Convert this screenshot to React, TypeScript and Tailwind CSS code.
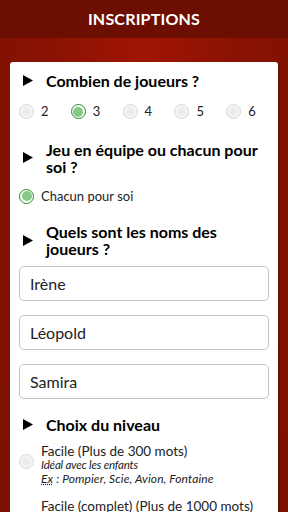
import React from 'react';

const Triangle = () => (
  <svg width="10" height="11" viewBox="0 0 10 11" className="shrink-0">
    <path d="M0 0 L10 5.5 L0 11 Z" fill="#000" />
  </svg>
);

const Radio = ({ checked = false }: { checked?: boolean }) => (
  <span
    className={`inline-flex items-center justify-center w-[15px] h-[15px] rounded-full shrink-0 ${
      checked
        ? 'border-[1.5px] border-[#1f8f1f] bg-white'
        : 'border border-[#d6d6d6] bg-[radial-gradient(circle,#e6e6e6_0%,#f6f6f6_70%)]'
    }`}
  >
    {checked && <span className="w-[10px] h-[10px] rounded-full bg-[#86c886]" />}
  </span>
);

const Heading = ({ children }: { children: React.ReactNode }) => (
  <div className="flex items-center pl-[13px] pr-2">
    <Triangle />
    <h2 className="ml-[13px] text-[16px] leading-[17px] font-bold text-black">{children}</h2>
  </div>
);

const players = ['Irène', 'Léopold', 'Samira'];

export default function App() {
  return (
    <div
      className="w-[288px] h-[512px] overflow-hidden text-[#222]"
      style={{ fontFamily: 'Lato, "Open Sans", sans-serif' }}
    >
      {/* Header */}
      <div className="h-[38px] bg-[#6d0e03] flex items-center justify-center">
        <h1 className="text-white font-bold text-[16px] tracking-[0.2px]">INSCRIPTIONS</h1>
      </div>

      {/* Body */}
      <div className="bg-[radial-gradient(ellipse_at_50%_0%,#a11503_0%,#8a1202_45%,#7a1203_100%)] h-full pt-[24px] px-[10px]">
        <div className="bg-white rounded-[3px] shadow-[1px_1px_2px_rgba(0,0,0,0.35)] pt-[10px] pb-6">
          {/* players count */}
          <Heading>Combien de joueurs ?</Heading>
          <div className="flex items-center pl-[9px] mt-[13px]">
            {['2', '3', '4', '5', '6'].map((n) => (
              <label key={n} className="flex items-center w-[53px] text-[13px] text-[#222]">
                <Radio checked={n === '3'} />
                <span className="ml-[7px]">{n}</span>
              </label>
            ))}
          </div>

          {/* team mode */}
          <div className="mt-[19px]">
            <Heading>
              Jeu en équipe ou chacun pour
              <br />
              soi ?
            </Heading>
          </div>
          <label className="flex items-center pl-[9px] mt-[12px] text-[13px] text-[#222]">
            <Radio checked />
            <span className="ml-[7px]">Chacun pour soi</span>
          </label>

          {/* names */}
          <div className="mt-[17px]">
            <Heading>
              Quels sont les noms des
              <br />
              joueurs ?
            </Heading>
          </div>
          <div className="px-[9px] mt-[9px] flex flex-col gap-[14px]">
            {players.map((p) => (
              <div
                key={p}
                className="h-[35px] border border-[#c4c4c4] rounded-[5px] flex items-center px-[10px] text-[16px] text-[#222]"
              >
                {p}
              </div>
            ))}
          </div>

          {/* level */}
          <div className="mt-[17px]">
            <Heading>Choix du niveau</Heading>
          </div>
          <div className="pl-[9px] mt-[11px] flex items-center">
            <span className="-mt-[4px]">
              <Radio />
            </span>
            <div className="ml-[7px]">
              <div className="text-[13.5px] leading-[14px] text-[#222]">Facile (Plus de 300 mots)</div>
              <div className="text-[11.5px] leading-[13.5px] italic tracking-[-0.2px] text-[#222]">
                Idéal avec les enfants
              </div>
              <div className="text-[12px] leading-[13.5px] italic tracking-[0.1px] text-[#222]">
                <span className="underline decoration-dotted">Ex</span> : Pompier, Scie, Avion, Fontaine
              </div>
            </div>
          </div>
          <div className="pl-[9px] mt-[14px] flex items-start">
            <span className="mt-[12px]">
              <Radio />
            </span>
            <div className="ml-[7px] text-[13.5px] leading-[14px] text-[#222]">
              Facile (complet) (Plus de 1000 mots)
            </div>
          </div>
        </div>
      </div>
    </div>
  );
}
